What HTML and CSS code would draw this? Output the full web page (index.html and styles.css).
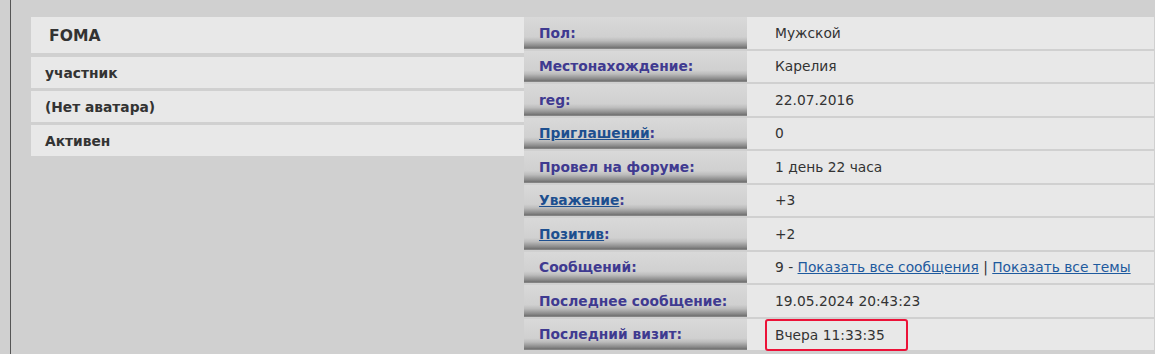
FILE: index.html
```html
<!DOCTYPE html>
<html lang="ru">
<head>
    <meta charset="UTF-8">
    <meta name="viewport" content="width=device-width, initial-scale=1.0">
    <title>Профиль FOMA</title>
    <link rel="stylesheet" href="styles.css">
</head>
<body>
    <div class="page">
        <div class="profile">
            <div class="user_box">
                <div class="user_row user_name">FOMA</div>
                <div class="user_row">участник</div>
                <div class="user_row">(Нет аватара)</div>
                <div class="user_row">Активен</div>
            </div>
            <div class="info_table">
                <div class="info_label">Пол:</div>
                <div class="info_value">Мужской</div>

                <div class="info_label">Местонахождение:</div>
                <div class="info_value">Карелия</div>

                <div class="info_label">reg:</div>
                <div class="info_value">22.07.2016</div>

                <div class="info_label"><a href="#">Приглашений</a>:</div>
                <div class="info_value">0</div>

                <div class="info_label">Провел на форуме:</div>
                <div class="info_value">1 день 22 часа</div>

                <div class="info_label"><a href="#">Уважение</a>:</div>
                <div class="info_value">+3</div>

                <div class="info_label"><a href="#">Позитив</a>:</div>
                <div class="info_value">+2</div>

                <div class="info_label">Сообщений:</div>
                <div class="info_value">9 - <a href="#">Показать все сообщения</a> | <a href="#">Показать все темы</a></div>

                <div class="info_label">Последнее сообщение:</div>
                <div class="info_value">19.05.2024 20:43:23</div>

                <div class="info_label">Последний визит:</div>
                <div class="info_value"><span class="mark">Вчера 11:33:35</span></div>
            </div>
        </div>
    </div>
</body>
</html>
```

FILE: styles.css
```css
* {
    margin: 0;
    padding: 0;
    box-sizing: border-box;
}

body {
    background-color: #d0d0d0;
    font-family: "DejaVu Sans", Verdana, sans-serif;
    font-size: 13.8px;
    color: #333;
    overflow: hidden;
}

.page {
    margin-left: 10px;
    border-left: 1px solid #555;
    padding: 17px 1px 0 20px;
    min-height: 354px;
}

.profile {
    display: flex;
    align-items: flex-start;
}

.user_box {
    width: 493px;
    display: flex;
    flex-direction: column;
    gap: 3px;
}

.user_row {
    background-color: #e8e8e8;
    height: 31px;
    padding-left: 14px;
    display: flex;
    align-items: center;
    font-weight: bold;
}

.user_row.user_name {
    height: 36px;
    margin-bottom: 1px;
    padding: 2px 0 0 18px;
    font-size: 15.6px;
}

.info_table {
    flex: 1;
    display: grid;
    grid-template-columns: 223px 1fr;
    grid-auto-rows: 31.5px;
    row-gap: 2px;
}

.info_label {
    background: linear-gradient(to bottom, #d9d9d9 0%, #d0d0d0 62%, #bcbcbc 74%, #8a8a8a 90%, #6f6f6f 97%, #9c9c9c 100%);
    color: #3f3a90;
    font-weight: bold;
    padding-left: 15px;
    display: flex;
    align-items: center;
    white-space: nowrap;
}

.info_label a {
    color: #1d4f8f;
}

.info_value {
    background-color: #e8e8e8;
    padding-left: 28px;
    display: flex;
    align-items: center;
    white-space: pre;
}

.info_value a {
    color: #1e5a9e;
}

.mark {
    margin: 1px 0 0 -10px;
    padding: 6px 21px 6px 8px;
    border: 2px solid #ec1238;
    border-radius: 3px;
}
```
